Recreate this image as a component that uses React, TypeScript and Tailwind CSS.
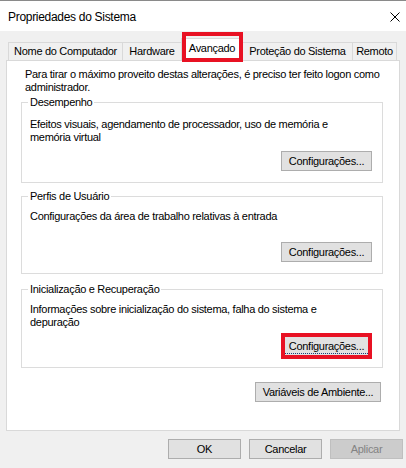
import type { ReactNode } from 'react';

interface WinButtonProps {
  children: ReactNode;
  className?: string;
  disabled?: boolean;
}

function WinButton({ children, className = '', disabled = false }: WinButtonProps) {
  return (
    <button
      type="button"
      disabled={disabled}
      className={`h-[20px] border text-center text-[11px] leading-[18px] whitespace-nowrap ${
        disabled
          ? 'bg-[#cccccc] border-[#bfbfbf] text-[#838383]'
          : 'bg-[#e1e1e1] border-[#adadad] text-black'
      } ${className}`}
    >
      {children}
    </button>
  );
}

interface GroupProps {
  title: string;
  className?: string;
  children: ReactNode;
}

function Group({ title, className = '', children }: GroupProps) {
  return (
    <fieldset className={`border border-[#dcdcdc] pl-[8px] pr-[10px] ${className}`}>
      <legend className="-ml-[2px] px-[2px] leading-[13px]">{title}</legend>
      {children}
    </fieldset>
  );
}

const tabBase =
  'h-[18px] -ml-px border-t border-x border-[#d9d9d9] bg-[#f0f0f0] pt-[2px] text-center leading-[13px] whitespace-nowrap';

export default function App() {
  return (
    <div className="w-[406px] h-[468px] overflow-hidden border-t border-[#8a8a8a] bg-[#f0f0f0] text-[11px] tracking-[-0.3px] text-black font-['Liberation_Sans',Arial,sans-serif]">
      {/* Title bar */}
      <div className="h-[30px] bg-white flex justify-between items-start pl-[8px] pr-[6px]">
        <span className="mt-[10px] leading-[13px] text-[12px]">Propriedades do Sistema</span>
        <svg width="10" height="10" viewBox="0 0 10 10" className="mt-[11px]">
          <path d="M0.5 0.5 L9.5 9.5 M9.5 0.5 L0.5 9.5" stroke="#000" strokeWidth="1" fill="none" />
        </svg>
      </div>

      {/* Tabs */}
      <div className="mx-[6px] pl-[3px] h-[29px] flex items-end">
        <div className={`${tabBase} w-[115px]`}>Nome do Computador</div>
        <div className={`${tabBase} w-[60px]`}>Hardware</div>
        <div className="relative z-10 -ml-px -mb-px w-[62px] h-[23px] border-t border-x border-[#d9d9d9] bg-white pt-[3px] text-center leading-[13px]">
          Avançado
          <span className="absolute left-0 -right-px -top-[7px] -bottom-px border-4 border-[#e81123]" />
        </div>
        <div className={`${tabBase} w-[111px]`}>Proteção do Sistema</div>
        <div className={`${tabBase} w-[45px]`}>Remoto</div>
      </div>

      {/* Panel */}
      <div className="mx-[6px] h-[371px] border border-[#d9d9d9] bg-white pt-[7px] pl-[14px] pr-[16px] whitespace-nowrap">
        <p className="pl-[4px] leading-[13px]">
          Para tirar o máximo proveito destas alterações, é preciso ter feito logon como
          <br />
          administrador.
        </p>

        <Group title="Desempenho" className="mt-[2px]">
          <p className="pt-[9px] leading-[13px]">
            Efeitos visuais, agendamento de processador, uso de memória e
            <br />
            memória virtual
          </p>
          <div className="flex justify-end mt-[7px] pb-[11px]">
            <WinButton className="w-[91px]">Configurações...</WinButton>
          </div>
        </Group>

        <Group title="Perfis de Usuário" className="mt-[7px]">
          <p className="pt-[7px] leading-[13px]">Configurações da área de trabalho relativas à entrada</p>
          <div className="flex justify-end mt-[19px] pb-[11px]">
            <WinButton className="w-[91px]">Configurações...</WinButton>
          </div>
        </Group>

        <Group title="Inicialização e Recuperação" className="mt-[9px]">
          <p className="pt-[7px] leading-[13px]">
            Informações sobre inicialização do sistema, falha do sistema e
            <br />
            depuração
          </p>
          <div className="flex justify-end mt-[7px] pb-[11px]">
            <div className="relative w-[91px]">
              <WinButton className="w-[91px]">Configurações...</WinButton>
              <span className="absolute left-[4px] right-[4px] bottom-[2px] border-b border-dotted border-[#1d3f7a]" />
              <span className="absolute left-0 right-0 -top-[3px] -bottom-[3px] border-4 border-[#e81123]" />
            </div>
          </div>
        </Group>

        <div className="flex justify-end mt-[14px] pr-[2px]">
          <WinButton className="w-[126px]">Variáveis de Ambiente...</WinButton>
        </div>
      </div>

      {/* Dialog buttons */}
      <div className="flex justify-end gap-[8px] mt-[8px] pr-[3px]">
        <WinButton className="w-[73px]">OK</WinButton>
        <WinButton className="w-[73px]">Cancelar</WinButton>
        <WinButton className="w-[73px]" disabled>
          Aplicar
        </WinButton>
      </div>
    </div>
  );
}
